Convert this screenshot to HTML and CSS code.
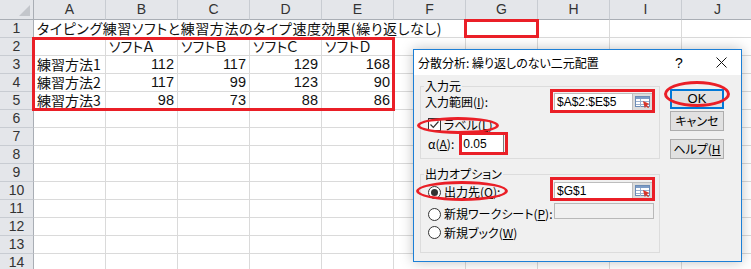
FILE: index.html
```
<!DOCTYPE html>
<html lang="ja">
<head>
    <meta charset="UTF-8">
    <title>分散分析</title>
    <link rel="stylesheet" href="styles.css">
</head>
<body>
<!-- Sheet -->
    <div class="sheet">
        <div class="row head">
            <div class="corner"><span class="tri"></span></div>
            <div class="ch">A</div><div class="ch">B</div><div class="ch">C</div><div class="ch">D</div><div class="ch">E</div>
            <div class="ch">F</div><div class="ch">G</div><div class="ch">H</div><div class="ch">I</div><div class="ch">J</div>
        </div>
        <div class="row">
            <div class="rh">1</div>
            <div class="c span6 title-cell">タイピング練習ソフトと練習方法のタイプ速度効果(繰り返しなし)</div>
            <div class="c"></div><div class="c"></div><div class="c"></div><div class="c"></div>
        </div>
        <div class="row">
            <div class="rh">2</div>
            <div class="c"></div><div class="c">ソフトＡ</div><div class="c">ソフトＢ</div><div class="c">ソフトＣ</div><div class="c">ソフトＤ</div>
            <div class="c"></div><div class="c"></div><div class="c"></div><div class="c"></div><div class="c"></div>
        </div>
        <div class="row">
            <div class="rh">3</div>
            <div class="c">練習方法1</div><div class="c num">112</div><div class="c num">117</div><div class="c num">129</div><div class="c num">168</div>
            <div class="c"></div><div class="c"></div><div class="c"></div><div class="c"></div><div class="c"></div>
        </div>
        <div class="row">
            <div class="rh">4</div>
            <div class="c">練習方法2</div><div class="c num">117</div><div class="c num">99</div><div class="c num">123</div><div class="c num">90</div>
            <div class="c"></div><div class="c"></div><div class="c"></div><div class="c"></div><div class="c"></div>
        </div>
        <div class="row">
            <div class="rh">5</div>
            <div class="c">練習方法3</div><div class="c num">98</div><div class="c num">73</div><div class="c num">88</div><div class="c num">86</div>
            <div class="c"></div><div class="c"></div><div class="c"></div><div class="c"></div><div class="c"></div>
        </div>
        <div class="row"><div class="rh">6</div><div class="c"></div><div class="c"></div><div class="c"></div><div class="c"></div><div class="c"></div><div class="c"></div><div class="c"></div><div class="c"></div><div class="c"></div><div class="c"></div></div>
        <div class="row"><div class="rh">7</div><div class="c"></div><div class="c"></div><div class="c"></div><div class="c"></div><div class="c"></div><div class="c"></div><div class="c"></div><div class="c"></div><div class="c"></div><div class="c"></div></div>
        <div class="row"><div class="rh">8</div><div class="c"></div><div class="c"></div><div class="c"></div><div class="c"></div><div class="c"></div><div class="c"></div><div class="c"></div><div class="c"></div><div class="c"></div><div class="c"></div></div>
        <div class="row"><div class="rh">9</div><div class="c"></div><div class="c"></div><div class="c"></div><div class="c"></div><div class="c"></div><div class="c"></div><div class="c"></div><div class="c"></div><div class="c"></div><div class="c"></div></div>
        <div class="row"><div class="rh">10</div><div class="c"></div><div class="c"></div><div class="c"></div><div class="c"></div><div class="c"></div><div class="c"></div><div class="c"></div><div class="c"></div><div class="c"></div><div class="c"></div></div>
        <div class="row"><div class="rh">11</div><div class="c"></div><div class="c"></div><div class="c"></div><div class="c"></div><div class="c"></div><div class="c"></div><div class="c"></div><div class="c"></div><div class="c"></div><div class="c"></div></div>
        <div class="row"><div class="rh">12</div><div class="c"></div><div class="c"></div><div class="c"></div><div class="c"></div><div class="c"></div><div class="c"></div><div class="c"></div><div class="c"></div><div class="c"></div><div class="c"></div></div>
        <div class="row"><div class="rh">13</div><div class="c"></div><div class="c"></div><div class="c"></div><div class="c"></div><div class="c"></div><div class="c"></div><div class="c"></div><div class="c"></div><div class="c"></div><div class="c"></div></div>
        <div class="row"><div class="rh">14</div><div class="c"></div><div class="c"></div><div class="c"></div><div class="c"></div><div class="c"></div><div class="c"></div><div class="c"></div><div class="c"></div><div class="c"></div><div class="c"></div></div>
    </div>

<!-- Dialog -->
    <div class="dialog">
        <div class="titlebar">
            <span class="title">分散分析: 繰り返しのない二元配置</span>
            <span class="tb-help">?</span>
            <span class="tb-close"><svg width="11" height="11" viewBox="0 0 11 11"><path d="M0.5 0.5L10.5 10.5M10.5 0.5L0.5 10.5" stroke="#111" stroke-width="1"/></svg></span>
        </div>
        <div class="dlg-body">
            <div class="groups">
                <fieldset class="grp grp-in">
                    <legend>入力元</legend>
                    <div class="line line-range">
                        <span class="lbl">入力範囲(<u>I</u>):</span>
                        <div class="refedit">
                            <span class="ref-text">$A$2:$E$5</span>
                            <span class="ref-btn"><svg width="16" height="12" viewBox="0 0 16 12"><rect x="0.5" y="0.5" width="14" height="10" fill="#fff" stroke="#6b8bb5"/><rect x="1" y="1" width="13" height="2" fill="#7d9cc6"/><path d="M1 5.5h13M1 8.5h13M5.5 3v8" stroke="#9ab0cf"/><path d="M8 5l6.5 3-2.6 1 2.2 2.2-1 1-2.2-2.2-1 2.6z" fill="#d8352a"/></svg></span>
                        </div>
                    </div>
                    <div class="line line-check">
                        <span class="check"><svg width="13" height="13" viewBox="0 0 13 13"><rect x="0.5" y="0.5" width="12" height="12" fill="#fff" stroke="#333"/><path d="M2.5 6.5l2.8 2.8L10.5 3.5" fill="none" stroke="#333" stroke-width="1.2"/></svg></span>
                        <span class="lbl">ラベル(<u>L</u>)</span>
                    </div>
                    <div class="line line-alpha">
                        <span class="lbl">α(<u>A</u>):</span>
                        <span class="textbox alpha">0.05</span>
                    </div>
                </fieldset>
                <fieldset class="grp grp-out">
                    <legend>出力オプション</legend>
                    <div class="line line-dest">
                        <span class="opt">
                            <span class="radio on"></span>
                            <span class="lbl">出力先(<u>O</u>):</span>
                        </span>
                        <div class="refedit">
                            <span class="ref-text">$G$1</span>
                            <span class="ref-btn"><svg width="16" height="12" viewBox="0 0 16 12"><rect x="0.5" y="0.5" width="14" height="10" fill="#fff" stroke="#6b8bb5"/><rect x="1" y="1" width="13" height="2" fill="#7d9cc6"/><path d="M1 5.5h13M1 8.5h13M5.5 3v8" stroke="#9ab0cf"/><path d="M8 5l6.5 3-2.6 1 2.2 2.2-1 1-2.2-2.2-1 2.6z" fill="#d8352a"/></svg></span>
                        </div>
                    </div>
                    <div class="line line-sheet">
                        <span class="opt">
                            <span class="radio"></span>
                            <span class="lbl">新規ワークシート(<u>P</u>):</span>
                        </span>
                        <span class="textbox disabled"></span>
                    </div>
                    <div class="line line-book">
                        <span class="opt">
                            <span class="radio"></span>
                            <span class="lbl">新規ブック(<u>W</u>)</span>
                        </span>
                    </div>
                </fieldset>
            </div>
            <div class="buttons">
                <div class="btn btn-ok">OK</div>
                <div class="btn">キャンセ</div>
                <div class="btn btn-help">ヘルプ(<u>H</u></div>
            </div>
        </div>
    </div>

<!-- Red annotations -->
    <div class="mark mark-table"></div>
    <div class="mark mark-g1"></div>
    <div class="mark mark-range"></div>
    <div class="mark ellipse mark-label"></div>
    <div class="mark mark-alpha"></div>
    <div class="mark ellipse mark-dest"></div>
    <div class="mark mark-destbox"></div>
    <div class="mark ellipse mark-ok"></div>
</body>
</html>
```

FILE: styles.css
```
        * {
            box-sizing: border-box;
        }
        /* Body Style */
        body {
            margin: 0;
            width: 751px;
            height: 269px;
            overflow: hidden;
            position: relative;
            background-color: #fff;
            font-family: "Noto Sans CJK JP", sans-serif;
            color: #000;
        }

        /* Sheet */
        .row {
            display: flex;
            height: 18px;
        }
        .row.head {
            height: 20px;
        }
        .corner, .rh, .ch {
            flex: none;
            background-color: #e4e6ea;
            color: #333;
            font-family: "Liberation Sans", sans-serif;
            font-size: 14px;
            text-align: center;
        }
        .corner {
            width: 34px;
            position: relative;
            border-right: 1px solid #a9aeb5;
            border-bottom: 1px solid #a9aeb5;
        }
        .corner .tri {
            position: absolute;
            right: 3px;
            bottom: 3px;
            width: 0;
            height: 0;
            border-left: 11px solid transparent;
            border-bottom: 11px solid #c3c6cb;
        }
        .ch {
            width: 72px;
            line-height: 19px;
            border-right: 1px solid #c8ccd2;
            border-bottom: 1px solid #a9aeb5;
        }
        .rh {
            width: 34px;
            line-height: 17px;
            border-right: 1px solid #a9aeb5;
            border-bottom: 1px solid #c8ccd2;
        }
        .c {
            flex: none;
            width: 72px;
            padding: 0 3px;
            font-size: 14px;
            line-height: 17px;
            white-space: nowrap;
            font-feature-settings: "palt";
            color: #111;
            border-right: 1px solid #dadada;
            border-bottom: 1px solid #dadada;
        }
        .c.span6 {
            width: 432px;
        }
        .c.title-cell {
            letter-spacing: 0.6px;
        }
        .c.num {
            text-align: right;
            font-family: "Liberation Sans", sans-serif;
            font-size: 14.5px;
        }

        /* Dialog */
        .dialog {
            position: absolute;
            left: 413px;
            top: 49px;
            width: 329px;
            height: 213px;
            border: 1px solid #1c7fd6;
            background-color: #f0f0f0;
            box-shadow: 0 0 12px rgba(0, 0, 0, 0.25);
            font-size: 12px;
            font-feature-settings: "palt";
        }
        .titlebar {
            display: flex;
            align-items: center;
            height: 25px;
            padding-left: 4px;
            background-color: #fff;
        }
        .title {
            flex: 1;
            font-size: 12px;
        }
        .tb-help {
            width: 28px;
            text-align: center;
            font-family: "Liberation Sans", sans-serif;
            font-size: 14px;
            margin-right: 8px;
        }
        .tb-close {
            width: 40px;
            display: flex;
            justify-content: center;
        }
        .dlg-body {
            display: flex;
            padding: 4px 0 0 6px;
        }
        .groups {
            width: 240px;
        }
        .grp {
            margin: 0;
            padding: 0;
            min-width: 0;
            border: 1px solid #dcdcdc;
        }
        .grp legend {
            margin-left: 3px;
            padding: 0 1px;
            line-height: 14px;
        }
        .grp-in {
            padding-bottom: 4px;
        }
        .grp-out {
            margin-top: 8px;
            padding-bottom: 13px;
        }
        .line {
            display: flex;
            align-items: center;
        }
        .lbl {
            line-height: 14px;
            white-space: nowrap;
        }
        .line-range {
            height: 18px;
            padding-left: 4px;
            justify-content: space-between;
        }
        .refedit {
            display: flex;
            width: 99px;
            height: 18px;
            margin-right: 6px;
            border: 1px solid #bdbdbd;
            background-color: #fff;
        }
        .ref-text {
            flex: 1;
            padding-left: 2px;
            font-family: "Liberation Sans", sans-serif;
            font-size: 12px;
            line-height: 16px;
        }
        .ref-btn {
            width: 20px;
            display: flex;
            align-items: center;
            justify-content: center;
            background-color: #dcdcdc;
            border-left: 1px solid #bdbdbd;
        }
        .line-check {
            height: 13px;
            margin-top: 7px;
            padding-left: 7px;
            gap: 3px;
        }
        .check {
            display: flex;
        }
        .line-alpha {
            height: 20px;
            margin-top: 3px;
            padding-left: 7px;
            gap: 6px;
        }
        .textbox {
            display: block;
            background-color: #fff;
            border: 1px solid #7a7a7a;
        }
        .textbox.alpha {
            width: 44px;
            height: 20px;
            padding-left: 2px;
            font-family: "Liberation Sans", sans-serif;
            line-height: 18px;
        }
        .textbox.disabled {
            width: 100px;
            height: 16px;
            margin-right: 5px;
            align-self: flex-start;
            margin-top: 1px;
            background-color: #f0f0f0;
            border-color: #b8b8b8;
        }
        .opt {
            display: flex;
            align-items: center;
            gap: 3px;
            padding-left: 7px;
        }
        .radio {
            width: 13px;
            height: 13px;
            border: 1px solid #333;
            border-radius: 50%;
            background-color: #fff;
            display: flex;
            align-items: center;
            justify-content: center;
        }
        .radio.on::after {
            content: "";
            width: 7px;
            height: 7px;
            border-radius: 50%;
            background-color: #333;
        }
        .line-dest {
            height: 18px;
            margin-top: 1px;
            justify-content: space-between;
        }
        .line-dest .opt {
            align-self: flex-end;
            margin-bottom: 1px;
        }
        .line-sheet {
            height: 19px;
            margin-top: 2px;
            justify-content: space-between;
            align-items: flex-end;
        }
        .line-book {
            height: 13px;
            margin-top: 5px;
        }

        /* Buttons */
        .buttons {
            width: 54px;
            margin: 10px 0 0 10px;
        }
        .btn {
            height: 20px;
            margin-bottom: 2px;
            border: 1px solid #adadad;
            background-color: #e1e1e1;
            text-align: center;
            line-height: 18px;
            white-space: nowrap;
            overflow: hidden;
        }
        .btn-ok {
            border: 2px solid #0078d7;
            line-height: 16px;
            font-family: "Liberation Sans", sans-serif;
            font-size: 13px;
        }
        .btn-help {
            margin-top: 8px;
        }

        /* Red marks */
        .mark {
            position: absolute;
            border: 3px solid #ea1f27;
        }
        .mark.ellipse {
            border-radius: 50%;
        }
        .mark-table { left: 32px; top: 37px; width: 363px; height: 74px; }
        .mark-g1 { left: 464px; top: 19px; width: 75px; height: 19px; }
        .mark-range { left: 550px; top: 89px; width: 105px; height: 24px; }
        .mark-label { left: 417px; top: 117px; width: 82px; height: 17px; }
        .mark-alpha { left: 459px; top: 132px; width: 49px; height: 23px; }
        .mark-dest { left: 416px; top: 181px; width: 92px; height: 20px; }
        .mark-destbox { left: 550px; top: 177px; width: 105px; height: 24px; }
        .mark-ok { left: 664px; top: 81px; width: 66px; height: 26px; }
```
